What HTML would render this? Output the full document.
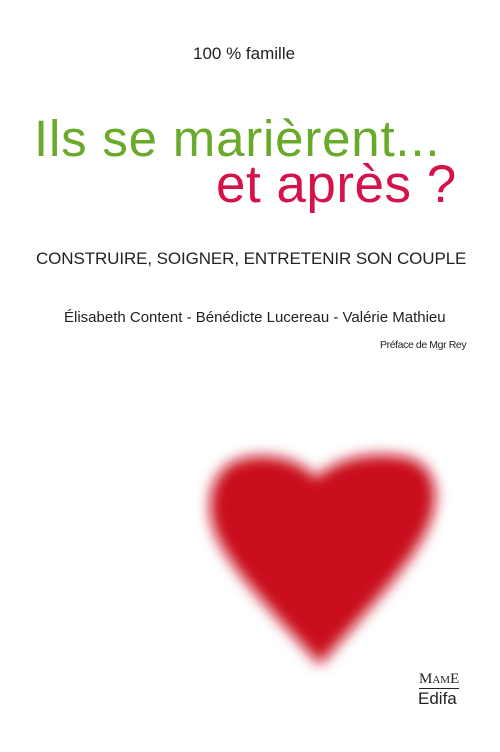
<!DOCTYPE html>
<html><head><meta charset="utf-8"><style>
html,body{margin:0;padding:0;background:#fff;}
body{width:500px;height:752px;position:relative;overflow:hidden;font-family:"Liberation Sans",sans-serif;}
.t{position:absolute;white-space:nowrap;line-height:1;}
</style></head><body>
<div class="t" style="left:193px;top:45px;font-size:17px;color:#222;">100 % famille</div>
<div class="t" style="left:34px;top:113px;font-size:51px;color:#6aaa2a;letter-spacing:0.8px;">Ils se marièrent...</div>
<div class="t" style="left:216px;top:158px;font-size:53px;color:#d5124a;letter-spacing:0.5px;">et après ?</div>
<div class="t" style="left:36px;top:250px;font-size:17px;color:#222;letter-spacing:-0.1px;">CONSTRUIRE, SOIGNER, ENTRETENIR SON COUPLE</div>
<div class="t" style="left:64px;top:310px;font-size:15px;color:#222;">Élisabeth Content - Bénédicte Lucereau - Valérie Mathieu</div>
<div class="t" style="left:380px;top:340px;font-size:10.5px;color:#222;letter-spacing:-0.4px;">Préface de Mgr Rey</div>
<svg style="position:absolute;left:0;top:0" width="500" height="752">
<defs><filter id="b" x="-20%" y="-20%" width="140%" height="140%"><feGaussianBlur stdDeviation="7"/></filter></defs>
<path filter="url(#b)" fill="#c90a1e" d="M316,478 C298,456 262,452 238,460 C210,470 204,505 216,535 C232,572 278,618 320,665 C362,615 410,568 428,527 C444,490 432,462 405,457 C372,451 336,458 316,478 Z"/>
</svg>
<div class="t" style="left:419px;top:672px;font-family:'Liberation Serif',serif;font-size:15px;color:#222;border-bottom:1px solid #222;padding-bottom:1px;">M<span style="font-size:11px">AM</span>E</div>
<div class="t" style="left:418px;top:690px;font-size:17px;color:#222;">Edifa</div>
</body></html>
